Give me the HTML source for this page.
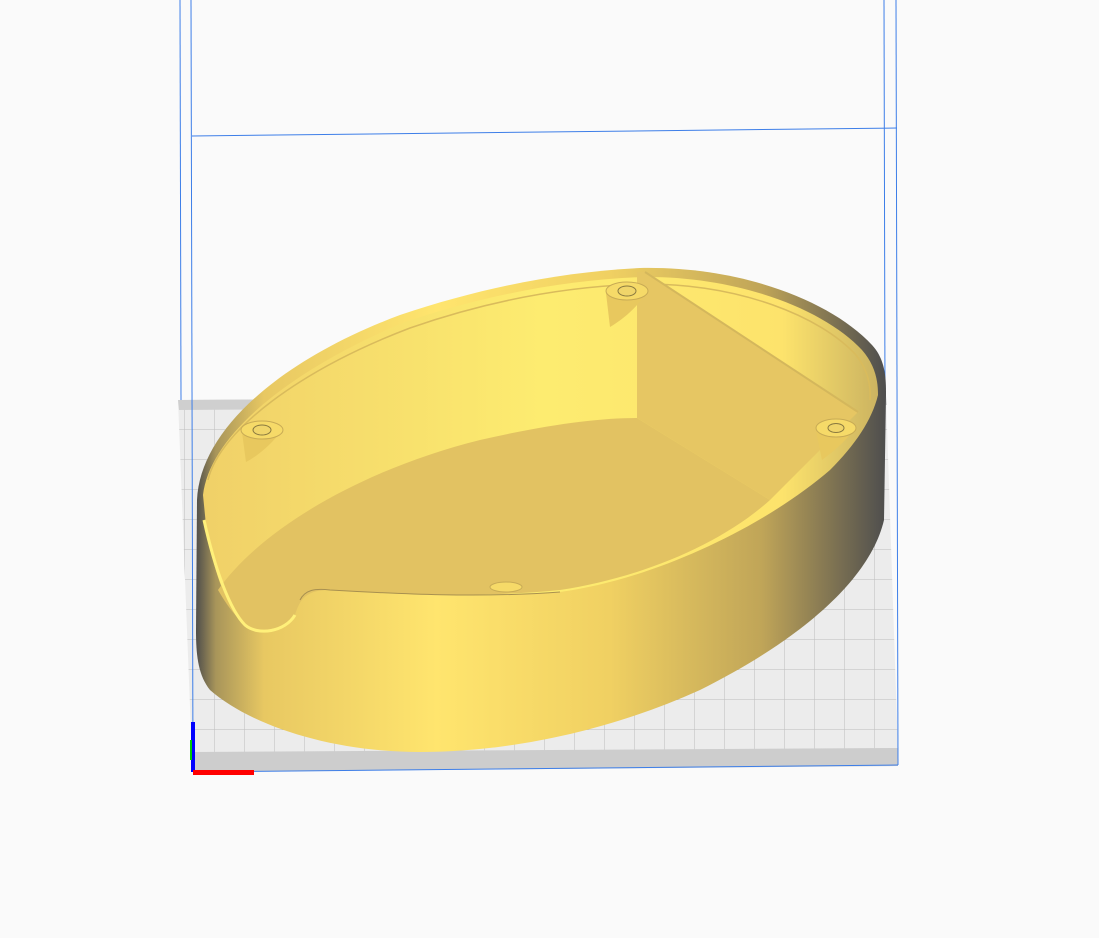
<!DOCTYPE html>
<html><head><style>html,body{margin:0;padding:0;background:#fafafa;}svg{display:block}</style></head>
<body>
<svg width="1099" height="938" viewBox="0 0 1099 938" xmlns="http://www.w3.org/2000/svg">
<defs>
<pattern id="grid" width="30" height="30" patternUnits="userSpaceOnUse" x="5" y="10">
<rect width="30" height="30" fill="#ececec"/>
<path d="M30 0V30M0 30H30" stroke="#bdbdbd" stroke-width="1" fill="none"/>
</pattern>
<linearGradient id="outer" x1="195" x2="886" y1="0" y2="0" gradientUnits="userSpaceOnUse">
<stop offset="0" stop-color="#4a4a4a"/>
<stop offset="0.03" stop-color="#a8955a"/>
<stop offset="0.1" stop-color="#e8c862"/>
<stop offset="0.35" stop-color="#ffe56e"/>
<stop offset="0.6" stop-color="#f0d062"/>
<stop offset="0.82" stop-color="#c0a558"/>
<stop offset="1" stop-color="#4e4e4e"/>
</linearGradient>
<linearGradient id="back" x1="200" x2="885" y1="0" y2="0" gradientUnits="userSpaceOnUse">
<stop offset="0" stop-color="#f0d068"/>
<stop offset="0.5" stop-color="#fdec70"/>
<stop offset="0.85" stop-color="#fde36c"/>
<stop offset="1" stop-color="#c8b060"/>
</linearGradient>
</defs>
<rect width="1099" height="938" fill="#fafafa"/>
<polygon points="178,400 886,396 898,752 192,758" fill="url(#grid)"/>
<polygon points="178,400 886,396 887,405 179,410" fill="#cfcfcf"/>
<polygon points="192,752 898,748 898,766 193,772" fill="#cdcdcd"/>
<g stroke="#3d7ee8" stroke-width="1" fill="none">
<line x1="180" y1="0" x2="181" y2="400"/>
<line x1="191" y1="0" x2="193" y2="772"/>
<line x1="884" y1="0" x2="885" y2="400"/>
<line x1="896" y1="0" x2="898" y2="765"/>
<line x1="192" y1="136" x2="897" y2="128"/>
<line x1="193" y1="772" x2="898" y2="765"/>
</g>
<path d="M197,500 C200,430 280,360 400,315 C480,288 560,272 640,268 C740,266 830,300 872,345 C886,360 886,380 886,395 L884,520 C870,580 800,640 700,690 C600,735 500,752 420,752 C330,752 250,725 210,690 C198,675 196,655 196,630 Z" fill="url(#outer)"/>
<path d="M203,495 C210,435 290,370 405,322 C485,295 565,280 643,277 C740,276 825,310 862,350 C875,365 878,380 878,395 C872,420 855,445 830,470 C760,530 650,580 560,592 C480,598 400,594 330,590 C305,590 300,600 295,615 C285,635 255,635 240,620 C220,595 212,560 206,525 Z" fill="url(#back)"/>
<path d="M208,480 C220,430 300,370 410,328 C490,300 568,286 645,284 C740,284 820,316 856,355 C868,370 871,385 870,400" fill="none" stroke="#d9bb5c" stroke-width="1.5"/>
<polygon points="637,272 645,272 858,412 770,500 637,418" fill="#e6c663"/>
<line x1="645" y1="272" x2="858" y2="412" stroke="#d4b75c" stroke-width="2"/>
<path d="M218,590 C260,530 360,470 480,440 C550,424 600,418 637,418 L770,500 C720,545 640,578 560,590 C480,598 400,594 330,590 C305,590 300,600 295,615 C285,635 255,635 240,620 C230,610 224,600 218,590 Z" fill="#e2c262"/>
<path d="M204,520 C215,570 230,610 245,625 C258,636 285,632 295,615" fill="none" stroke="#fff07a" stroke-width="3"/>
<path d="M300,600 C305,590 315,588 330,590 C400,594 480,598 560,592" fill="none" stroke="#a89050" stroke-width="1"/>
<g>
<path d="M242,432 L246,462 C260,455 275,440 282,430 Z" fill="#e8c85e"/>
<ellipse cx="262" cy="430" rx="21" ry="9" fill="#f6da68" stroke="#c8ab55"/>
<ellipse cx="262" cy="430" rx="9" ry="5" fill="#f0d56a" stroke="#8a7a40"/>
<path d="M606,293 L610,327 C625,318 640,305 647,290 Z" fill="#e8c85e"/>
<ellipse cx="627" cy="291" rx="21" ry="9" fill="#f6da68" stroke="#c8ab55"/>
<ellipse cx="627" cy="291" rx="9" ry="5" fill="#f0d56a" stroke="#8a7a40"/>
<path d="M816,430 L822,460 C835,450 848,440 855,426 Z" fill="#e8c85e"/>
<ellipse cx="836" cy="428" rx="20" ry="9" fill="#f6da68" stroke="#c8ab55"/>
<ellipse cx="836" cy="428" rx="8" ry="4.5" fill="#f0d56a" stroke="#8a7a40"/>
<ellipse cx="506" cy="587" rx="16" ry="5" fill="#f6da68" stroke="#c8ab55"/>
</g>
<rect x="191" y="722" width="4" height="50" fill="#0000ff"/>
<rect x="190" y="740" width="2" height="20" fill="#00cc00"/>
<rect x="193" y="770" width="61" height="5" fill="#ff0000"/>
</svg>
</body></html>
